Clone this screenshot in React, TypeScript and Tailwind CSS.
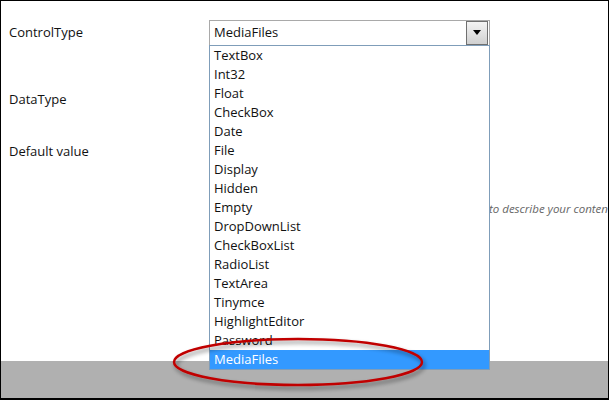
const options = [
  'TextBox',
  'Int32',
  'Float',
  'CheckBox',
  'Date',
  'File',
  'Display',
  'Hidden',
  'Empty',
  'DropDownList',
  'CheckBoxList',
  'RadioList',
  'TextArea',
  'Tinymce',
  'HighlightEditor',
  'Password',
  'MediaFiles',
];

export default function App() {
  const selected = 'MediaFiles';

  return (
    <div className="relative w-[609px] h-[400px] overflow-hidden border border-b-2 border-black bg-white font-['Open_Sans',sans-serif] text-[13px] text-[#111]">
      <div className="flex h-full flex-col">
        <div className="flex-1 pl-2 pt-[18px]">
          <div className="flex h-[26px] items-center pt-px">
            <div className="w-[200px] shrink-0">ControlType</div>
            <div className="flex h-[26px] w-[281px] items-center border border-[#a9a9a9] bg-white pl-1 pr-px">
              <span className="flex-1 pt-px">{selected}</span>
              <span className="flex h-[24px] w-[22px] items-center justify-center border border-[#707070] bg-gradient-to-b from-[#f4f4f4] to-[#d0d0d0]">
                <svg width="8" height="5" viewBox="0 0 8 5">
                  <path d="M0 0H8L4 5Z" fill="#000" />
                </svg>
              </span>
            </div>
          </div>

          <div className="mt-[41px] flex h-[26px] items-center pt-px">
            <div className="w-[200px] shrink-0">DataType</div>
          </div>

          <div className="mt-[26px] flex h-[26px] items-center pt-px">
            <div className="w-[200px] shrink-0">Default value</div>
          </div>

          <div className="mt-[37px] flex h-[16px] items-center">
            <div className="w-[200px] shrink-0" />
            <div className="shrink-0 whitespace-nowrap pl-[280px] text-[11.5px] italic text-[#666]">
              to describe your content
            </div>
          </div>
        </div>
        <div className="h-[37px] bg-[#b0b0b0]" />
      </div>

      {/* open dropdown list */}
      <ul className="absolute left-[208px] top-[44px] w-[281px] border border-[#7f9db9] bg-white">
        {options.map((o) => (
          <li
            key={o}
            className={`flex h-[19px] items-center pl-1 pt-px ${
              o === selected ? 'bg-[#3399ff] text-white' : ''
            }`}
          >
            {o}
          </li>
        ))}
      </ul>

      {/* red annotation ellipse */}
      <svg className="pointer-events-none absolute left-0 top-0" width="609" height="400">
        <defs>
          <filter id="sh" x="-10%" y="-30%" width="120%" height="160%">
            <feDropShadow dx="2" dy="3" stdDeviation="2" floodColor="#000" floodOpacity="0.45" />
          </filter>
        </defs>
        <ellipse
          cx="297"
          cy="361"
          rx="124"
          ry="23"
          fill="none"
          stroke="#c00000"
          strokeWidth="2.5"
          filter="url(#sh)"
        />
      </svg>
    </div>
  );
}
